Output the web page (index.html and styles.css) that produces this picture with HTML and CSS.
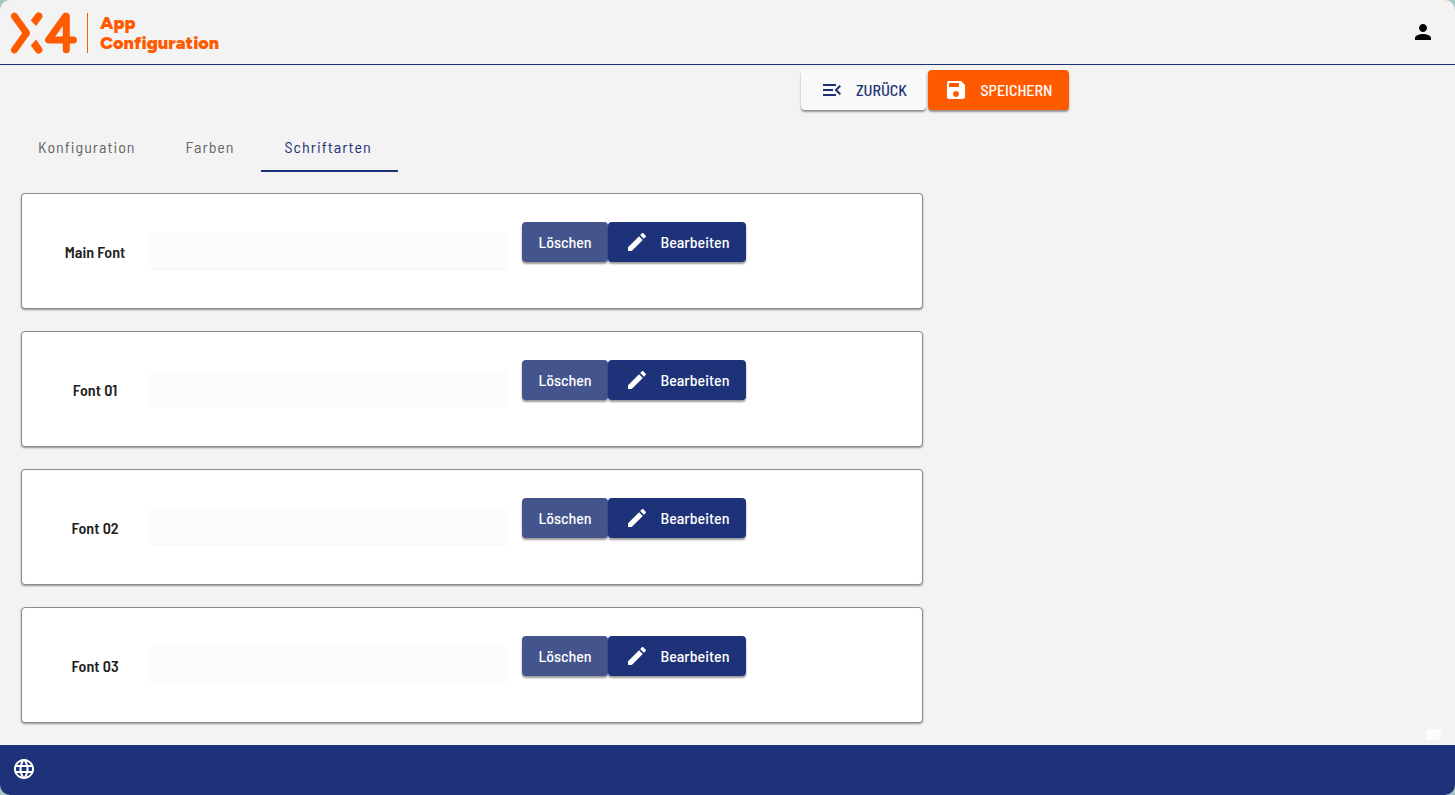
FILE: index.html
```
<!DOCTYPE html>
<html lang="de">
<head>
    <meta charset="UTF-8">
    <meta name="viewport" content="width=device-width, initial-scale=1">
    <title>X4 App Configuration</title>
    <link rel="stylesheet" href="styles.css">
</head>
<body>
<div class="app">
    <header class="header">
        <a class="brand" href="#" aria-label="X4 App Configuration">
            <svg class="logo" viewBox="0 0 68 42" aria-hidden="true">
                <g fill="none" stroke="#ff5a00" stroke-width="7" stroke-linejoin="round">
                    <path stroke-linecap="round" d="M4.500 4.200L16.500 21 4.500 37.800"/>
                    <path stroke-linecap="round" d="M55.500 4.200L38.500 28H63.400M56.300 4.200V37.800"/>
                </g>
                <g fill="#ff5a00">
                    <path d="M25.400 2.200A3.800 3.800 0 0 1 31.800 6.300L26 14 20.800 8.500Z"/>
                    <path d="M25.400 39.800A3.800 3.800 0 0 0 31.800 35.700L26 27.500 20.800 33.500Z"/>
                </g>
            </svg>
            <span class="brand-name">App<br>Configuration</span>
        </a>
        <button class="user" type="button" aria-label="Benutzer">
            <svg viewBox="0 0 24 24"><path d="M12 12c2.210 0 4-1.790 4-4s-1.790-4-4-4-4 1.790-4 4 1.790 4 4 4zm0 2c-2.670 0-8 1.340-8 4v2h16v-2c0-2.660-5.330-4-8-4z"/></svg>
        </button>
    </header>
    <main class="main">
        <div class="actions">
            <button class="btn btn-back" type="button">
                <svg viewBox="0 0 24 24"><path d="M3 18h13v-2H3v2zM3 13h10v-2H3v2zM3 6v2h13V6H3zM21 15.590L17.420 12 21 8.410 19.590 7l-5 5 5 5L21 15.590z"/></svg>
                <span>ZURÜCK</span>
            </button>
            <button class="btn btn-save" type="button">
                <svg viewBox="0 0 24 24"><path d="M17 3H5c-1.110 0-2 .9-2 2v14c0 1.100.89 2 2 2h14c1.100 0 2-.9 2-2V7l-4-4zm-5 16c-1.660 0-3-1.340-3-3s1.340-3 3-3 3 1.340 3 3-1.340 3-3 3zm3-10H5V5h10v4z"/></svg>
                <span>SPEICHERN</span>
            </button>
        </div>
        <nav class="tabs">
            <a href="#konfiguration">Konfiguration</a>
            <a href="#farben">Farben</a>
            <a class="on" href="#schriftarten">Schriftarten</a>
        </nav>
        <section class="fonts">
            <div class="card">
                <label for="font0">Main Font</label>
                <input id="font0" type="text" readonly>
                <div class="bt">
                    <button class="btn btn-delete" type="button">Löschen</button>
                    <button class="btn btn-edit" type="button">
                        <svg viewBox="0 0 24 24"><path d="M3 17.250V21h3.750L17.810 9.940l-3.750-3.750L3 17.250zM20.710 7.040c.39-.39.39-1.020 0-1.410l-2.340-2.340c-.39-.39-1.020-.39-1.410 0l-1.830 1.830 3.750 3.750 1.830-1.830z"/></svg>
                        <span>Bearbeiten</span>
                    </button>
                </div>
            </div>
            <div class="card">
                <label for="font1">Font 01</label>
                <input id="font1" type="text" readonly>
                <div class="bt">
                    <button class="btn btn-delete" type="button">Löschen</button>
                    <button class="btn btn-edit" type="button">
                        <svg viewBox="0 0 24 24"><path d="M3 17.250V21h3.750L17.810 9.940l-3.750-3.750L3 17.250zM20.710 7.040c.39-.39.39-1.020 0-1.410l-2.340-2.340c-.39-.39-1.020-.39-1.410 0l-1.830 1.830 3.750 3.750 1.830-1.830z"/></svg>
                        <span>Bearbeiten</span>
                    </button>
                </div>
            </div>
            <div class="card">
                <label for="font2">Font 02</label>
                <input id="font2" type="text" readonly>
                <div class="bt">
                    <button class="btn btn-delete" type="button">Löschen</button>
                    <button class="btn btn-edit" type="button">
                        <svg viewBox="0 0 24 24"><path d="M3 17.250V21h3.750L17.810 9.940l-3.750-3.750L3 17.250zM20.710 7.040c.39-.39.39-1.020 0-1.410l-2.340-2.340c-.39-.39-1.020-.39-1.410 0l-1.830 1.830 3.750 3.750 1.830-1.830z"/></svg>
                        <span>Bearbeiten</span>
                    </button>
                </div>
            </div>
            <div class="card">
                <label for="font3">Font 03</label>
                <input id="font3" type="text" readonly>
                <div class="bt">
                    <button class="btn btn-delete" type="button">Löschen</button>
                    <button class="btn btn-edit" type="button">
                        <svg viewBox="0 0 24 24"><path d="M3 17.250V21h3.750L17.810 9.940l-3.750-3.750L3 17.250zM20.710 7.040c.39-.39.39-1.020 0-1.410l-2.340-2.340c-.39-.39-1.020-.39-1.410 0l-1.830 1.830 3.750 3.750 1.830-1.830z"/></svg>
                        <span>Bearbeiten</span>
                    </button>
                </div>
            </div>
        </section>
        <div class="status"></div>
    </main>
    <footer class="footer">
        <button class="lang" type="button" aria-label="Sprache">
            <svg viewBox="0 0 24 24"><path d="M11.990 2C6.470 2 2 6.480 2 12s4.470 10 9.990 10C17.520 22 22 17.520 22 12S17.520 2 11.990 2zm6.930 6h-2.950c-.32-1.250-.78-2.450-1.380-3.560 1.840.63 3.370 1.910 4.330 3.560zM12 4.040c.83 1.200 1.480 2.530 1.910 3.960h-3.820c.43-1.430 1.080-2.760 1.910-3.960zM4.260 14C4.100 13.360 4 12.690 4 12s.1-1.360.26-2h3.380c-.08.66-.14 1.320-.14 2s.06 1.340.14 2H4.260zm.82 2h2.950c.32 1.250.78 2.450 1.380 3.560-1.840-.63-3.370-1.900-4.330-3.560zm2.950-8H5.080c.96-1.660 2.490-2.930 4.330-3.560C8.810 5.550 8.350 6.750 8.030 8zM12 19.960c-.83-1.200-1.480-2.530-1.910-3.960h3.820c-.43 1.430-1.080 2.760-1.910 3.960zM14.340 14H9.660c-.09-.66-.16-1.320-.16-2s.07-1.350.16-2h4.680c.09.65.16 1.320.16 2s-.07 1.340-.16 2zm.25 5.560c.6-1.110 1.060-2.310 1.380-3.560h2.950c-.96 1.650-2.490 2.930-4.330 3.560zM16.360 14c.08-.66.14-1.320.14-2s-.06-1.340-.14-2h3.380c.16.64.26 1.310.26 2s-.1 1.360-.26 2h-3.380z"/></svg>
        </button>
    </footer>
</div>
</body>
</html>
```
FILE: styles.css
```
* {margin:0; padding:0; box-sizing:border-box;}
body {background:#a7c5c4; font-family:"Barlow Semi Condensed", Roboto, sans-serif; font-size:16px; color:#212121;}
a {text-decoration:none; color:inherit;}
button {border:0; background:none; font:inherit; cursor:pointer;}
svg {display:block; width:24px; height:24px; fill:currentColor;}

.app {min-height:100vh; display:flex; flex-direction:column; background:#f3f3f3; border-radius:10px; overflow:hidden;}

/* header */
.header {display:flex; align-items:center; justify-content:space-between; height:65px; padding:0 20px 0 10px; border-bottom:1px solid #1d3278;}
.brand {display:flex; align-items:center; gap:9px; color:#ff5a00;}
.logo {width:68px; height:42px; margin-top:2px;}
.brand-name {border-left:1px solid #ff5a00; padding-left:12px; font:900 18px/20px Figtree, Montserrat, Inter, sans-serif; margin-top:2px;}
.user {color:#000;}

/* content */
.main {flex:1; display:flex; flex-direction:column; padding:5px 14px;}
.actions {display:flex; justify-content:flex-end; gap:2px; width:100%; max-width:1055px;}
.btn {display:flex; align-items:center; justify-content:center; gap:12px; height:40px; padding:0 16px; border-radius:4px; font-size:16px; line-height:20px; font-weight:500; color:#fff; box-shadow:0 2px 2px rgba(0,0,0,.4);}
.btn-back {min-width:125px; background:#f9f9f9; color:#1d3278;}
.btn-save {min-width:141px; background:#ff5a00;}
.btn-delete {min-width:86px; background:#44548d;}
.btn-edit {min-width:138px; background:#1d3278;}

.tabs {display:flex; margin-top:14px;}
.tabs a {padding:0 26px 0 24px; line-height:46px; border-bottom:2px solid transparent; letter-spacing:1px; color:#666;}
.tabs a.on {color:#1d3278; border-color:#1d3278;}

.fonts {display:grid; gap:22px; width:100%; max-width:916px; padding:21px 7px 0 7px;}
.card {display:grid; grid-template-columns:110px 357px 1fr; align-items:center; height:116px; padding:0 18px; background:#fff; border:1px solid #8c8c8c; border-radius:4px; box-shadow:0 1px 2px rgba(0,0,0,.4);}
.card label {text-align:center; font-weight:600;}
.card input {width:100%; height:38px; padding:0 12px; background:#fcfcfc; border:0; border-bottom:1px solid #f7f7f7; border-radius:4px; font:inherit; outline:0;}
.bt {display:flex; padding:0 0 18px 15px;}

.status {align-self:flex-end; width:15px; height:11px; margin-top:auto; background:#fcfcfc;}

/* footer */
.footer {display:flex; align-items:center; height:50px; padding:0 12px 2px 12px; background:#1d3278;}
.lang {color:#fff;}
```
